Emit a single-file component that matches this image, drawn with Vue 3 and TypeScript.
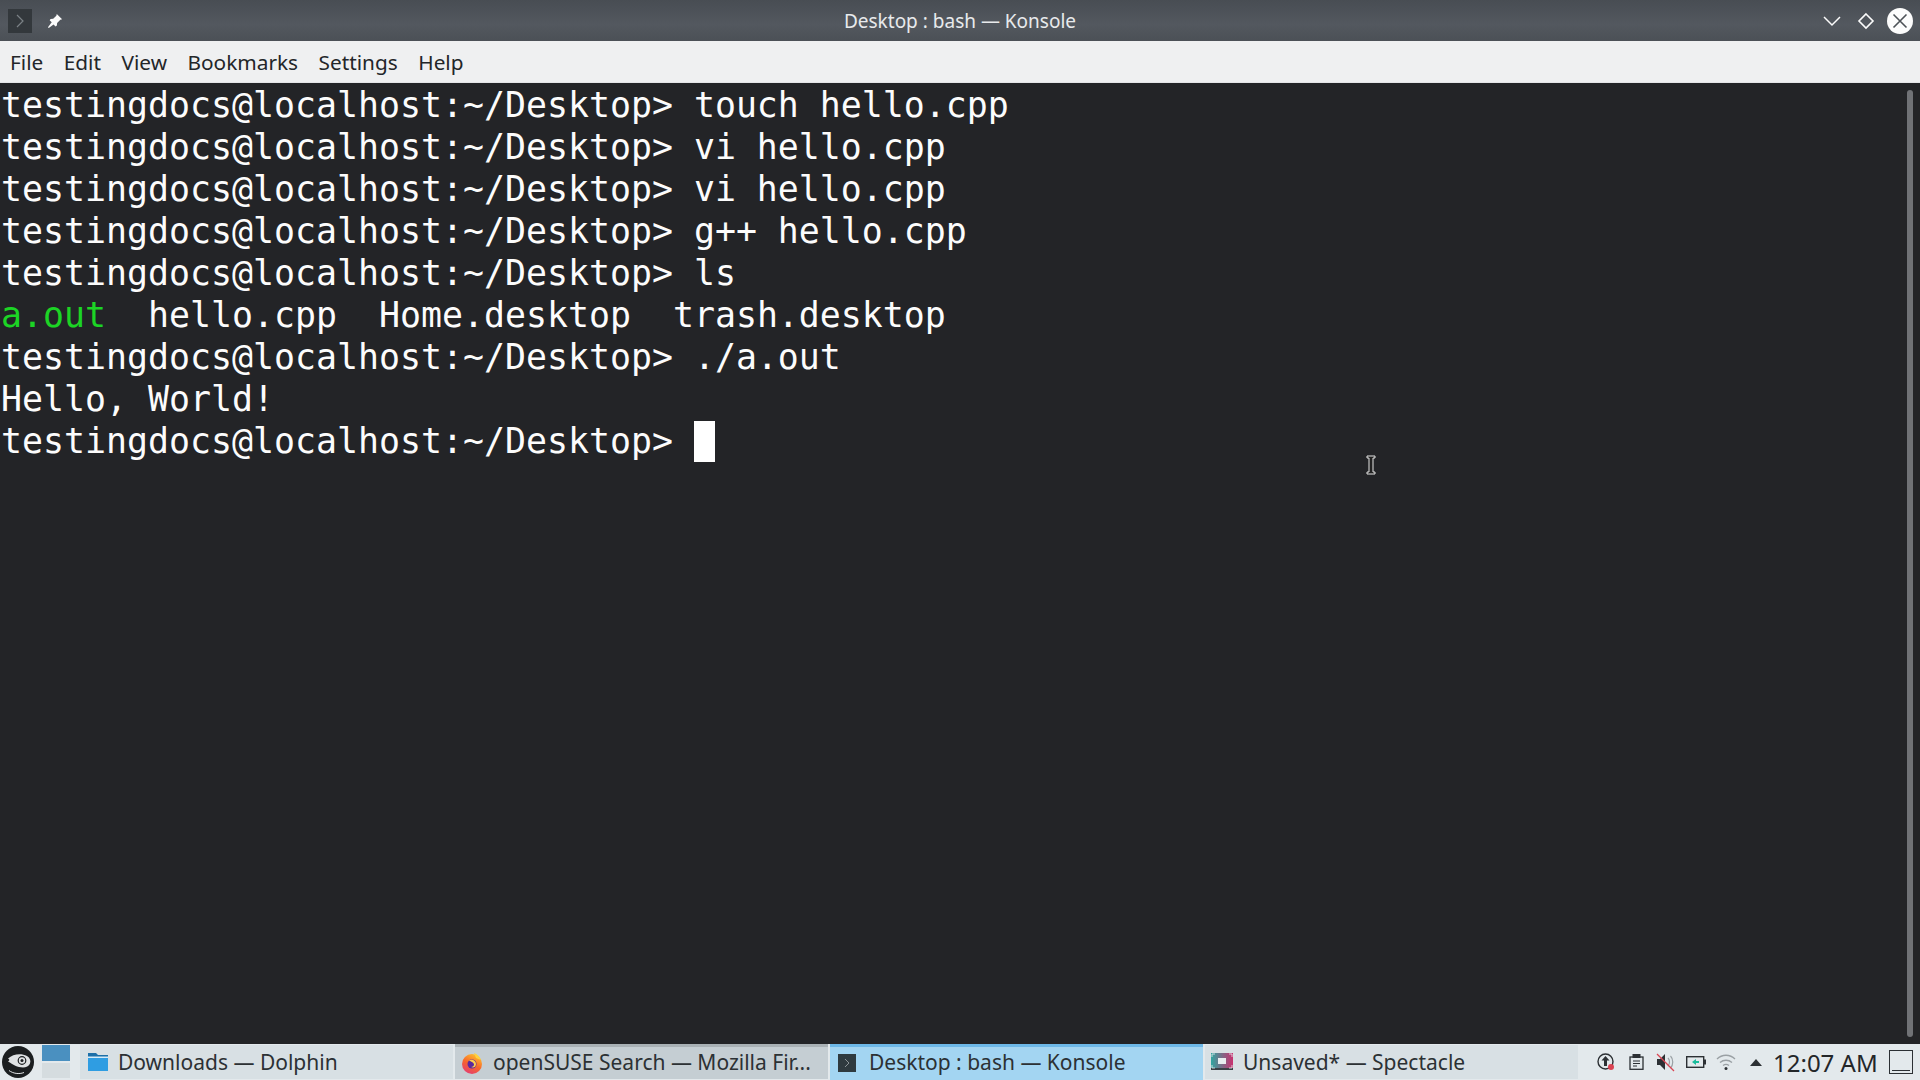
<script setup lang="ts">
interface Seg { text: string; cls?: string }
const lines: Seg[][] = [
  [{ text: 'testingdocs@localhost:~/Desktop> touch hello.cpp' }],
  [{ text: 'testingdocs@localhost:~/Desktop> vi hello.cpp' }],
  [{ text: 'testingdocs@localhost:~/Desktop> vi hello.cpp' }],
  [{ text: 'testingdocs@localhost:~/Desktop> g++ hello.cpp' }],
  [{ text: 'testingdocs@localhost:~/Desktop> ls' }],
  [{ text: 'a.out', cls: 'green' }, { text: '  hello.cpp  Home.desktop  trash.desktop' }],
  [{ text: 'testingdocs@localhost:~/Desktop> ./a.out' }],
  [{ text: 'Hello, World!' }],
]
const menus = ['File', 'Edit', 'View', 'Bookmarks', 'Settings', 'Help']
</script>

<template>
  <div class="screen">
    <header class="titlebar">
      <div class="tb-left">
        <span class="app-icon">
          <svg width="24" height="24" viewBox="0 0 24 24" fill="none"><path d="M9 6l6 6-6 6" stroke="#7b8286" stroke-width="1.2" /></svg>
        </span>
        <svg class="pin" width="16" height="16" viewBox="0 0 18 18"><path d="M11 1l6 6-2 .6-3.600 3.600-.3 3-1.400 1-2.400-2.400L2 17l-.9-.9 4.200-5.600L3 8.200l1-1.400 3-.3 3.500-3.500z" fill="#fcfcfc" /></svg>
      </div>
      <div class="tb-title">Desktop : bash — Konsole</div>
      <div class="tb-right">
        <svg class="btn-min" width="20" height="14" viewBox="0 0 20 14" fill="none"><path d="M2 3l8 8 8-8" stroke="#fcfcfc" stroke-width="1.5" /></svg>
        <svg class="btn-max" width="18" height="18" viewBox="0 0 18 18" fill="none"><path d="M9 2l7 7-7 7-7-7z" stroke="#fcfcfc" stroke-width="1.6" /></svg>
        <span class="close">
          <svg width="16" height="16" viewBox="0 0 16 16" fill="none"><path d="M1.500 1.500l13 13M14.500 1.500l-13 13" stroke="#4d5257" stroke-width="1.600" /></svg>
        </span>
      </div>
    </header>

    <nav class="menubar">
      <span v-for="m in menus" :key="m" class="menu-item">{{ m }}</span>
    </nav>

    <main class="terminal">
      <div class="term-text">
        <div v-for="(line, i) in lines" :key="i" class="line"><span v-for="(s, j) in line" :key="j" :class="s.cls">{{ s.text }}</span></div>
        <div class="line">testingdocs@localhost:~/Desktop> <span class="cursor"></span></div>
      </div>
      <div class="scrollbar"></div>
      <svg class="ibeam" width="10" height="20" viewBox="0 0 10 20" fill="none">
        <path d="M1 1h8v2H7v14h2v2H1v-2h2V3H1z" fill="#222" stroke="#e4e4e4" stroke-width="1" />
      </svg>
    </main>

    <footer class="taskbar">
      <svg class="suse" width="34" height="34" viewBox="0 0 34 34">
        <circle cx="17" cy="17" r="16" fill="#1b1e20" />
        <path d="M7 13.500C12 9 20 8 26 11c3 2 4 4.500 3 7.500-1 2.500-4 4-7 4-5.500 0-10-3-15-6 1.500-1 2-2 0-3z" fill="#dfe2e4" />
        <path d="M5 16c5 5 11 9 19 8.500" fill="none" stroke="#1b1e20" stroke-width="1" />
        <circle cx="21" cy="15.500" r="3.800" fill="none" stroke="#1b1e20" stroke-width="1.200" />
        <circle cx="21" cy="15.500" r="1.500" fill="#1b1e20" />
        <path d="M8 25.500c4 3 10 4 15 2" fill="none" stroke="#dfe2e4" stroke-width="1" />
      </svg>
      <div class="pager">
        <span class="desk active"></span>
        <span class="desk"></span>
      </div>

      <div class="tasks">
        <div class="task plain dolphin">
          <svg class="task-icon" width="22" height="20" viewBox="0 0 22 20">
            <path d="M1 1h8l2 2h10v15H1z" fill="#1d6fa8" />
            <path d="M1 6h20v13H1z" fill="#2f9de2" />
            <path d="M1 4.500h20V6H1z" fill="#d5ecf9" />
          </svg>
          <span class="label">Downloads — Dolphin</span>
        </div>
        <div class="task hovered">
          <svg class="task-icon" width="22" height="22" viewBox="0 0 22 22">
            <defs>
              <linearGradient id="ff" x1="0.700" x2="0.200" y1="0" y2="1">
                <stop offset="0" stop-color="#ffc22e" />
                <stop offset="0.500" stop-color="#f7662b" />
                <stop offset="1" stop-color="#e23a78" />
              </linearGradient>
            </defs>
            <circle cx="11" cy="12" r="10" fill="url(#ff)" />
            <path d="M13 1c3 1 6 4 7 7l-5-2z" fill="#ffd23e" />
            <circle cx="11" cy="12" r="4.500" fill="#5b2a9d" />
            <path d="M8 8.500c3-2 7 0 7 3.500s-3 4-5 3c2 0 3-1 3-2.500 0-2-3-3-5-4z" fill="#ffcf4d" />
          </svg>
          <span class="label">openSUSE Search — Mozilla Fir...</span>
        </div>
        <div class="task current">
          <svg class="task-icon" width="18" height="18" viewBox="0 0 18 18">
            <rect width="18" height="18" fill="#2f3a3f" />
            <path d="M7 5l4 4-4 4" fill="none" stroke="#8c9497" stroke-width="1" />
          </svg>
          <span class="label">Desktop : bash — Konsole</span>
        </div>
        <div class="task plain spectacle">
          <svg class="task-icon" width="22" height="18" viewBox="0 0 22 18">
            <defs>
              <linearGradient id="spec" x1="0" x2="1" y1="0" y2="0">
                <stop offset="0" stop-color="#2fa6a0" />
                <stop offset="1" stop-color="#c9306f" />
              </linearGradient>
            </defs>
            <rect width="22" height="16" fill="url(#spec)" />
            <rect y="15" width="22" height="2" fill="#3a4146" />
            <rect x="7" y="5" width="8" height="6" fill="#e8edf0" />
            <path d="M1 4V1h3M21 4V1h-3M1 12v3h3M21 12v3h-3" fill="none" stroke="#e8edf0" stroke-width=".8" />
          </svg>
          <span class="label">Unsaved* — Spectacle</span>
        </div>
      </div>

      <div class="tray">
        <span class="slot">
          <svg width="20" height="20" viewBox="0 0 20 20" fill="none">
            <circle cx="9.500" cy="9.500" r="7.500" stroke="#2c3034" stroke-width="1.400" />
            <path d="M9.500 4l4 4.500H11V14H8V8.500H5.500z" fill="#2c3034" />
            <circle cx="15" cy="15" r="3" fill="#da4453" />
          </svg>
        </span>
        <span class="slot">
          <svg width="15" height="16" viewBox="0 0 15 16" fill="none">
            <rect x="1" y="3" width="13" height="12.300" stroke="#2c3034" stroke-width="1.300" />
            <rect x="3.500" y="0" width="8" height="4" fill="#2c3034" />
            <path d="M4 7h7M4 9.500h7M4 12h4" stroke="#2c3034" stroke-width="1.100" />
          </svg>
        </span>
        <span class="slot">
          <svg width="20" height="20" viewBox="0 0 20 20" fill="none">
            <path d="M1 7h3l5-5v16l-5-5H1z" fill="#2c3034" />
            <path d="M12 6c2 2 2 6 0 8M14.500 4c3 3 3 9 0 12" stroke="#9aa0a4" stroke-width="1.200" />
            <path d="M1 2l17 17" stroke="#da4453" stroke-width="1.200" />
          </svg>
        </span>
        <span class="slot">
          <svg width="20" height="14" viewBox="0 0 20 14" fill="none">
            <rect x=".7" y="1.700" width="17" height="10.600" stroke="#2c3034" stroke-width="1.400" />
            <rect x="18" y="4.500" width="2" height="5" fill="#2c3034" />
            <path d="M6 7l4-3v2h3v2h-3v2z" fill="#1abc9c" />
          </svg>
        </span>
        <span class="slot">
          <svg width="20" height="18" viewBox="0 0 20 18" fill="none">
            <path d="M1 6c5-5 13-5 18 0M4 9.500c3.500-3 8.500-3 12 0M7 12.500c2-1.500 4-1.500 6 0" stroke="#9aa0a4" stroke-width="1.300" />
            <circle cx="10" cy="15.500" r="1.500" fill="#2c3034" />
          </svg>
        </span>
        <span class="slot"><span class="tri"></span></span>
        <span class="clock">12:07 AM</span>
        <span class="show-desktop"><i></i></span>
      </div>
    </footer>
  </div>
</template>

<style scoped>
.screen {
  width: 1920px;
  height: 1080px;
  display: flex;
  flex-direction: column;
  overflow: hidden;
  font-family: "Noto Sans", sans-serif;
  color: #232629;
}
.titlebar {
  height: 41px;
  flex: none;
  display: grid;
  grid-template-columns: 1fr auto 1fr;
  align-items: center;
  background: linear-gradient(#484d53, #53585f 60%, #4b5056);
  color: #e8eaec;
  font-size: 19px;
}
.tb-left {
  display: flex;
  align-items: center;
  gap: 15px;
  padding-left: 8px;
}
.app-icon {
  width: 24px;
  height: 24px;
  background: #33383c;
  display: flex;
}
.tb-right {
  display: flex;
  align-items: center;
  justify-content: flex-end;
  padding-right: 7px;
}
.btn-max {
  margin-left: 15px;
}
.close {
  margin-left: 12px;
  width: 26px;
  height: 26px;
  border-radius: 50%;
  background: #fcfcfc;
  display: flex;
  align-items: center;
  justify-content: center;
}
.menubar {
  height: 42px;
  flex: none;
  box-sizing: border-box;
  display: flex;
  align-items: center;
  gap: 20.500px;
  padding: 0 0 0 10px;
  background: #eff0f1;
  border-bottom: 1px solid #e4e5e7;
  font-size: 20.800px;
}
.terminal {
  flex: 1;
  position: relative;
  background: #232427;
  color: #fcfcfc;
  font-family: "DejaVu Sans Mono", monospace;
  font-size: 34.880px;
}
.term-text {
  padding: 1px 0 0 1px;
}
.line {
  height: 42px;
  line-height: 42px;
  white-space: pre;
}
.green {
  color: #1cd425;
}
.cursor {
  display: inline-block;
  width: 21px;
  height: 41px;
  margin-top: 1px;
  background: #fff;
  vertical-align: top;
}
.scrollbar {
  position: absolute;
  right: 7px;
  top: 7px;
  bottom: 7px;
  width: 6px;
  border-radius: 3px;
  background: #707276;
}
.ibeam {
  position: absolute;
  left: 1366px;
  top: 372px;
}
.taskbar {
  height: 36px;
  flex: none;
  display: flex;
  align-items: center;
  background: #e3e9ec;
  font-size: 21px;
}
.suse {
  flex: none;
  margin-left: 1px;
}
.pager {
  flex: none;
  width: 28px;
  height: 36px;
  margin-left: 7px;
  display: flex;
  flex-direction: column;
  gap: 2px;
  padding: 1px 0 2px;
  box-sizing: border-box;
}
.desk {
  flex: 1;
  background: #d5dcdf;
}
.desk.active {
  background: #4a90c0;
}
.tasks {
  flex: none;
  margin-left: 10px;
  display: grid;
  grid-template-columns: repeat(4, 373px);
  column-gap: 2px;
  height: 36px;
}
.task {
  display: flex;
  align-items: center;
  gap: 10px;
  padding-left: 6px;
  white-space: nowrap;
  overflow: hidden;
  color: #2c3134;
  box-sizing: border-box;
}
.label {
  margin-top: -2px;
}
.plain .label {
  margin-top: -1px;
}
.current .label {
  margin-top: -3px;
}
.task-icon {
  flex: none;
  margin-top: -1px;
}
.plain {
  background: #d8e0e4;
  margin-top: 1px;
  margin-bottom: 1px;
}
.dolphin {
  padding-left: 7px;
  gap: 9px;
}
.hovered {
  background: #c5ced3;
  border-top: 3px solid #a9b1b5;
  margin-bottom: 1px;
}
.current {
  background: #a3d5f2;
  border-top: 3px solid #6db8e8;
  padding-left: 8px;
  gap: 13px;
}
.tray {
  flex: 1;
  display: flex;
  align-items: center;
  padding-left: 13px;
}
.slot {
  flex: none;
  width: 30px;
  display: flex;
  align-items: center;
  justify-content: center;
}
.tri {
  width: 0;
  height: 0;
  border-left: 6px solid transparent;
  border-right: 6px solid transparent;
  border-bottom: 7px solid #2c3034;
}
.clock {
  font-size: 24px;
  white-space: nowrap;
  margin-left: 2px;
  width: 116px;
  flex: none;
}
.show-desktop {
  flex: none;
  width: 24px;
  height: 24px;
  border: 1px solid #2c3034;
  box-sizing: border-box;
  display: flex;
  align-items: flex-end;
  padding: 2px;
}
.show-desktop i {
  display: block;
  width: 100%;
  height: 1px;
  background: #2c3034;
}
</style>

<style>
html, body {
  margin: 0;
  background: #232427;
}
</style>
